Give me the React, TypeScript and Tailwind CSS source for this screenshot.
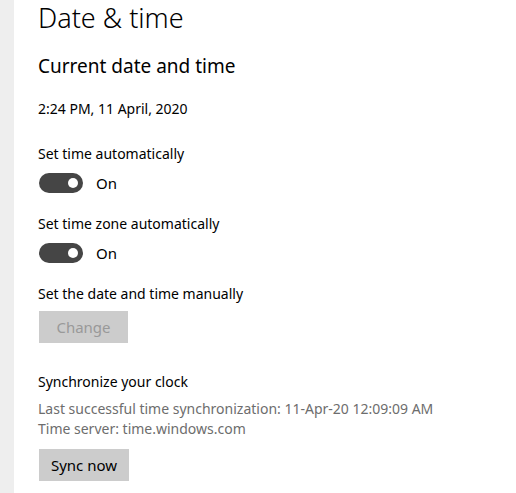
import React from "react";

function Toggle() {
  return (
    <div className="flex items-center gap-[13px] h-[20px]">
      <div className="w-[44px] h-[20px] rounded-full bg-[#454545] flex items-center justify-end pr-[5px]">
        <div className="w-[10px] h-[10px] rounded-full bg-white" />
      </div>
      <span className="text-[15px] text-black leading-[20px]">On</span>
    </div>
  );
}

export default function App() {
  return (
    <div
      className="w-[516px] h-[493px] bg-white flex overflow-hidden"
      style={{ fontFamily: '"Noto Sans", "Open Sans", sans-serif' }}
    >
      <div className="w-[14px] h-full bg-[#eeeeee] shrink-0" />
      <div className="flex flex-col pl-[25px] pt-0">
        <h1 className="text-[27px] leading-[36px] text-black font-light -ml-[1px]">Date &amp; time</h1>
        <h2 className="text-[19px] leading-[26px] text-black font-normal mt-[17px] -ml-[1px]">Current date and time</h2>
        <div className="text-[14px] leading-[20px] text-black mt-[20px] -ml-[1px]">2:24 PM, 11 April, 2020</div>

        <div className="text-[14px] leading-[20px] text-black mt-[25px] -ml-[1px]">Set time automatically</div>
        <div className="mt-[9px]"><Toggle /></div>

        <div className="text-[14px] leading-[20px] text-black mt-[21px] -ml-[1px]">Set time zone automatically</div>
        <div className="mt-[9px]"><Toggle /></div>

        <div className="text-[14px] leading-[20px] text-black mt-[21px] -ml-[1px]">Set the date and time manually</div>
        <div className="mt-[7px] w-[89px] h-[32px] bg-[#cccccc] text-[#999999] text-[15px] flex items-center justify-center">Change</div>

        <div className="text-[14px] leading-[20px] text-black mt-[29px] -ml-[1px]">Synchronize your clock</div>
        <div className="text-[14px] leading-[20px] text-[#6d6d6d] mt-[7px] -ml-[1px]">Last successful time synchronization: 11-Apr-20 12:09:09 AM</div>
        <div className="text-[14px] leading-[20px] text-[#6d6d6d] -ml-[1px]">Time server: time.windows.com</div>
        <div className="mt-[10px] w-[90px] h-[32px] bg-[#cccccc] text-black text-[15px] flex items-center justify-center">Sync now</div>
      </div>
    </div>
  );
}
